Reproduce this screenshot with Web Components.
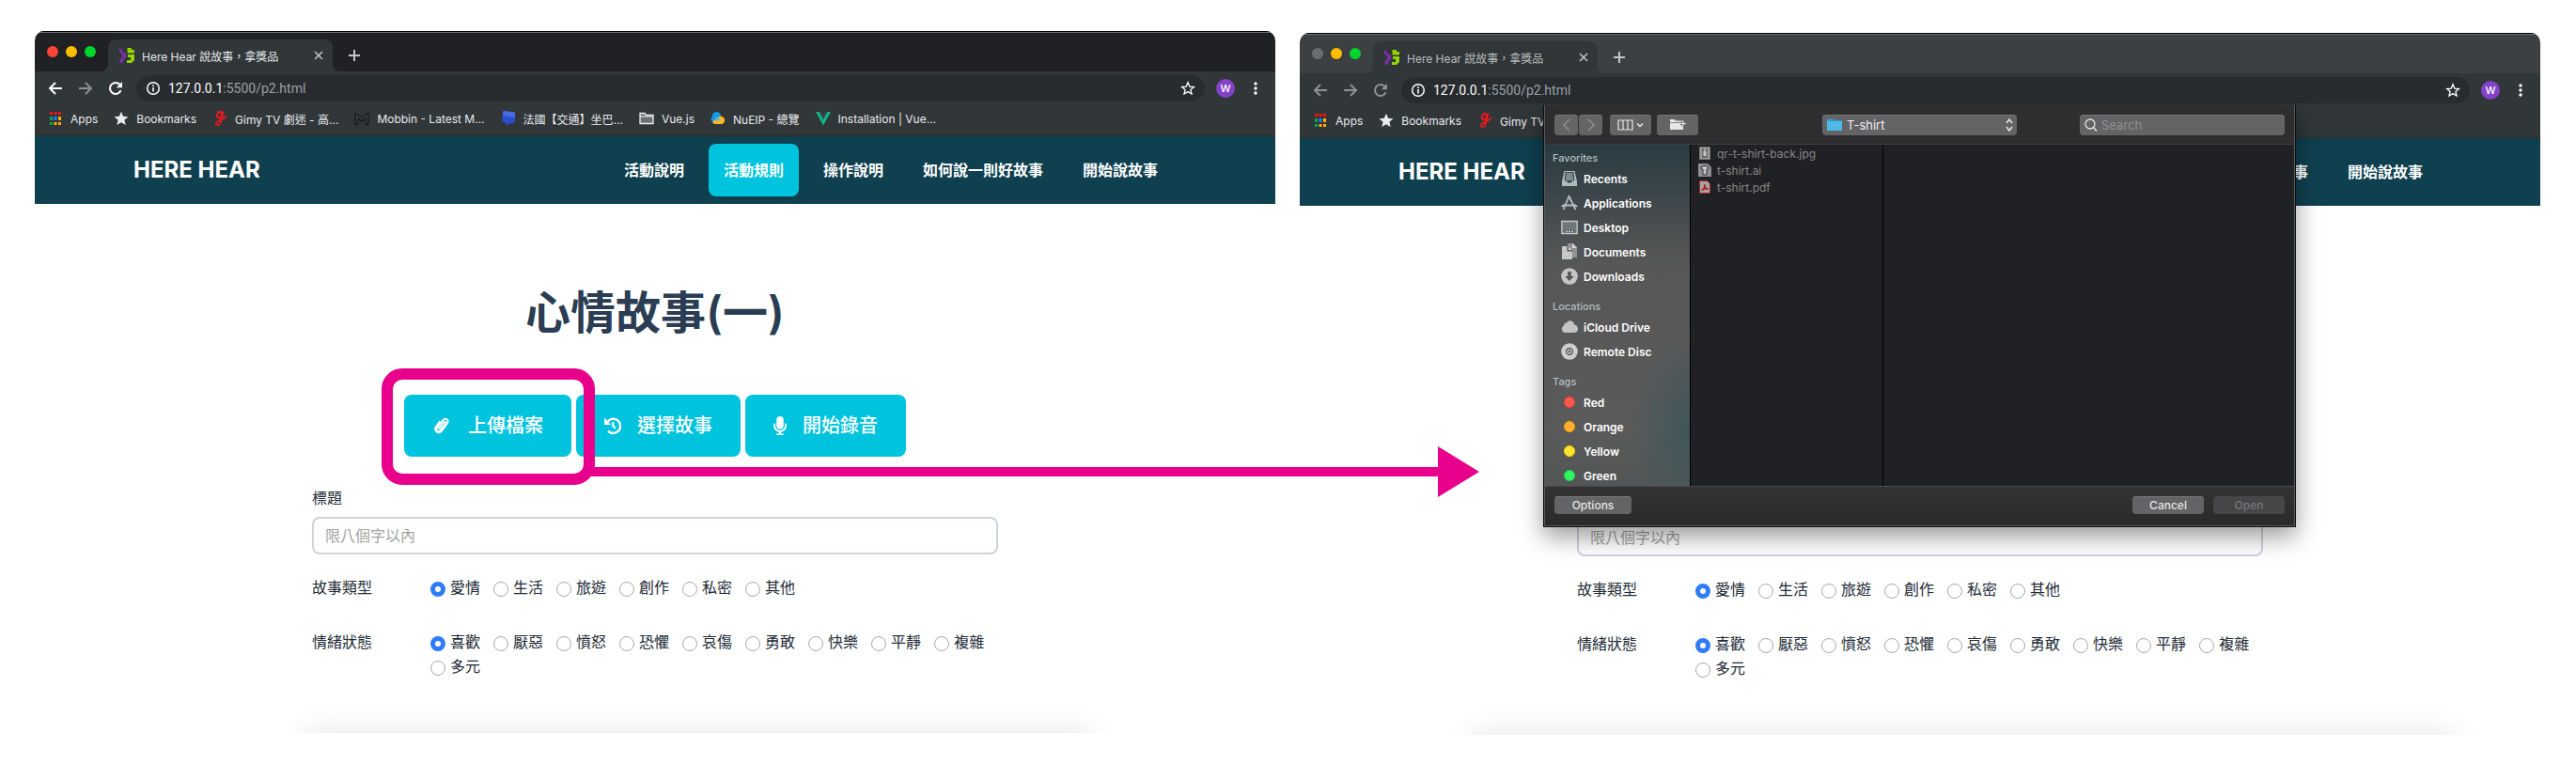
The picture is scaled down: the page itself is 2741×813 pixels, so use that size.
<!DOCTYPE html>
<html lang="zh-Hant">
<head>
<meta charset="utf-8">
<title>Here Hear 說故事，拿獎品</title>
<style>
  body { margin: 0; background: #fff; font-family: Inter, "Noto Sans CJK TC", sans-serif; }
</style>
</head>
<body>
<upload-guide></upload-guide>

<script>
const ICONS = {
  back: ['0 0 16 16', '<path d="M15 8H2M8 2L2 8l6 6" fill="none" stroke="currentColor" stroke-width="2"/>'],
  forward: ['0 0 16 16', '<path d="M1 8h13M8 2l6 6-6 6" fill="none" stroke="currentColor" stroke-width="2"/>'],
  reload: ['0 0 16 16', '<path d="M13.6 10.2A6 6 0 1 1 12.5 4" fill="none" stroke="currentColor" stroke-width="2"/><path d="M15 1v6.2H8.8z" fill="currentColor"/>'],
  info: ['0 0 16 16', '<circle cx="8" cy="8" r="6.3" fill="none" stroke="currentColor" stroke-width="1.5"/><path d="M7.2 7h1.6v4.6H7.2zM7.2 4.3h1.6v1.6H7.2z" fill="currentColor"/>'],
  star: ['0 0 16 16', '<path d="M8 1.8l1.8 4.3 4.6.4-3.5 3 1.1 4.5L8 11.600l-4 2.4 1.100-4.500-3.500-3 4.600-.4z" fill="none" stroke="currentColor" stroke-width="1.3"/>'],
  starFull: ['0 0 16 16', '<path d="M8 .8l2.100 5 5.400.4-4.100 3.500 1.300 5.300L8 12.200l-4.700 2.800 1.300-5.300L.5 6.200l5.400-.4z" fill="currentColor"/>'],
  dots: ['0 0 16 16', '<g fill="currentColor"><circle cx="8" cy="3" r="1.7"/><circle cx="8" cy="8" r="1.7"/><circle cx="8" cy="13" r="1.7"/></g>'],
  close: ['0 0 16 16', '<path d="M4 4l8 8M12 4l-8 8" stroke="currentColor" stroke-width="1.5"/>'],
  plus: ['0 0 16 16', '<path d="M8 2v12M2 8h12" stroke="currentColor" stroke-width="2"/>'],
  favicon: ['0 0 16 16', '<path d="M0 0l3 1.500v3h2l2 1.500v5H5v2l-2 3H.5v-4L3 10V7L0 4.500z" fill="#7b2fa5"/><path d="M8.500 0H13v2h3v3.500H8.500zM9 7h7v6l-3 3H8v-3h4v-3H9z" fill="#93d400"/>'],
  apps: ['0 0 16 16', '<path d="M2 1h3v3H2zM6.500 1h3v3h-3zM11 1h3v3h-3z" fill="#f11"/><path d="M2 6h3v4H2zM2 12h3v3H2z" fill="#00a651"/><path d="M6.500 6h3v4h-3z" fill="#1a82ff"/><path d="M11 6h3v4h-3zM6.500 12h3v3h-3zM11 12h3v3h-3z" fill="#ffab00"/>'],
  gimy: ['0 0 16 16', '<ellipse cx="7.500" cy="4.200" rx="2.300" ry="3.300" transform="rotate(25 7.500 4.200)" fill="none" stroke="#f5161e" stroke-width="2"/><path d="M11.500 1L8.800 11.500c-.7 2.900-2.600 4-4.200 3.300-1.500-1-.2-3.300 2.500-4.300 3-1.100 5.500-2.200 7.400-4.700" fill="none" stroke="#f5161e" stroke-width="1.700" stroke-linecap="round"/>'],
  mobbin: ['0 0 16 16', '<path d="M1 14.500V2l7 5 7-5v12.500h-3V8.500l-4 2.800-4-2.800v6z" fill="#23272a" stroke="#15181a"/><path d="M2.800 13V5L8 8.700 13.200 5v8" fill="none" stroke="#4a4f52" stroke-width=".8"/>'],
  bluebox: ['0 0 16 16', '<path d="M2.500 0L15 1.500V11l-1.500 2-5.500.5L6 16l-.5-3L1 11z" fill="#2e4fd0"/><path d="M2.500 0L15 1.500V7L1.500 5z" fill="#456be8"/>'],
  folderLine: ['0 0 16 16', '<path d="M1 13.500V2.500h5l1.500 2H15v9z" fill="#6c7073" stroke="#eee" stroke-width="1.300"/><path d="M1 6h14" stroke="#eee"/>'],
  nueip: ['0 0 16 16', '<path d="M4.500 13A4 4 0 0 1 2 6a4.500 4.500 0 0 1 8.500-2.500L11 6 8 13z" fill="#139be4"/><path d="M5 14l4-8a4 4 0 1 1 3.500 8z" fill="#ffb818"/><path d="M2 12l3-3 4 1-1.500 4H4z" fill="#f2b233"/><path d="M6 6.500l4.500 4M6 10.500l3-4" stroke="#5ab9e8" stroke-width="1.200"/>'],
  vue: ['0 0 16 16', '<path d="M0 1h3.500L8 9l4.500-8H16L8 15.500z" fill="#10b981"/><path d="M3.500 1H6l2 3.500L10 1h2.500L8 9z" fill="#34495e"/>'],
  clip: ['0 0 21 20', '<path d="M5.800 12.900l5.700-6.200c1.100-1.200 2.900.2 1.800 1.500l-6.500 7c-2.200 2.200-5.300-.5-3.200-2.900l7.300-8c2.800-2.900 6.900.6 4.300 3.700l-6.400 7.200c-3.700 4.100-9.600-.7-6-4.900L7.300 5.400" transform="translate(1 0) rotate(-6 9 10)" fill="none" stroke="currentColor" stroke-width="1.800" stroke-linecap="round"/>'],
  history: ['0 0 18 20', '<path d="M3.200 6.200A7.600 7.600 0 1 1 4 15.600" fill="none" stroke="currentColor" stroke-width="2.400"/><path d="M0 1.500V9h7.200z" fill="currentColor"/><path d="M9.300 6v4.600l2.700 2.100" fill="none" stroke="currentColor" stroke-width="2"/>'],
  mic: ['0 0 352 512', '<path fill="currentColor" d="M176 352c53.020 0 96-42.980 96-96V96c0-53.020-42.980-96-96-96S80 42.980 80 96v160c0 53.020 42.980 96 96 96zm160-160h-16c-8.840 0-16 7.160-16 16v48c0 74.800-64.490 134.820-140.790 127.380C96.710 376.890 48 317.110 48 250.300V208c0-8.840-7.160-16-16-16H16c-8.840 0-16 7.160-16 16v40.160c0 89.640 63.970 169.550 152 181.690V464H96c-8.840 0-16 7.160-16 16v16c0 8.840 7.160 16 16 16h160c8.840 0 16-7.160 16-16v-16c0-8.840-7.160-16-16-16h-56v-33.770C285.710 418.470 352 344.900 352 256v-48c0-8.840-7.160-16-16-16z"/>'],
  left: ['0 0 16 16', '<path d="M11 2L5 8l6 6" fill="none" stroke="currentColor" stroke-width="1.400"/>'],
  right: ['0 0 16 16', '<path d="M5 2l6 6-6 6" fill="none" stroke="currentColor" stroke-width="1.400"/>'],
  columns: ['0 0 28 16', '<path d="M1 3h15v10H1zM6 3v10M11 3v10" fill="none" stroke="currentColor" stroke-width="1.200"/><path d="M21 6.500l3 3 3-3" fill="none" stroke="currentColor" stroke-width="1.500"/>'],
  newFolder: ['0 0 18 16', '<path d="M1 2h5l1 1.500h8V13H1z" fill="currentColor"/><path d="M1 5.500h11" stroke="#646466" stroke-width=".8"/><path d="M15 3.500v6M12 6.500h6" stroke="#646466" stroke-width="3"/><path d="M15 3.500v6M12 6.500h6" stroke="currentColor" stroke-width="1.200"/>'],
  blueFolder: ['0 0 16 16', '<path d="M0 14V1.500h6L7.500 3H16v11z" fill="#2e9fd0"/><path d="M0 4h16v10H0z" fill="#4fb9e6"/>'],
  updown: ['0 0 16 16', '<path d="M5 6l3-4 3 4M5 10l3 4 3-4" fill="none" stroke="currentColor" stroke-width="1.500"/>'],
  search: ['0 0 16 16', '<circle cx="6" cy="7" r="5" fill="none" stroke="currentColor" stroke-width="1.300"/><path d="M9.500 10.500L13 14.500" stroke="currentColor" stroke-width="1.500"/>'],
  recents: ['0 0 18 18', '<path d="M3.500 1h11L17 12v5H1v-5z" fill="#aebcc1"/><path d="M4.500 2h9l.8 9.500h-2.300l-1 2H7l-1-2H3.700z" fill="#38484e"/><path d="M5.500 4h7M5.300 6h7.400M5 8h8M5 10h8" stroke="#c3ced2"/>'],
  applications: ['0 0 18 18', '<path d="M9 1L2.500 16M8 1l7.500 15M5 11.500h8" fill="none" stroke="#b3bec2" stroke-width="1.800"/><path d="M1 13c1-1.500 2.500-2 4-2M17 13c-1-1.500-2.500-2-4-2" fill="none" stroke="#b3bec2" stroke-width="2"/>'],
  desktop: ['0 0 18 18', '<path d="M.8 2.500h16.400v13H.8z" fill="#6f7678" stroke="#c3c9cb" stroke-width="1.300"/><path d="M4 12h10v3H4z" fill="#3f4547"/><path d="M5 12.500h2v2H5zM8 12.500h2v2H8zM11 12.500h2v2h-2z" fill="#d5d9da"/>'],
  documents: ['0 0 18 18', '<path d="M7 0h6l4 4v11H7z" fill="#8f9192"/><path d="M12 0l5 5h-5z" fill="#d9d9d9"/><path d="M1 3h6l5 5v9H1z" fill="#c6c7c8"/><path d="M6.500 2v6.500H13z" fill="#57595a"/><path d="M8 3.500V7h3.600z" fill="#d9d9d9"/>'],
  downloads: ['0 0 18 18', '<circle cx="9" cy="9" r="8.800" fill="#c6c6c6"/><path d="M7.200 4h3.600v5h3L9 14 4.200 9h3z" fill="#555"/>'],
  cloud: ['0 0 18 18', '<path d="M4 15a4 4 0 0 1-1-7.500 3 3 0 0 1 3-3 4.300 4.300 0 0 1 8 2A4.300 4.300 0 0 1 14.500 15z" fill="#c4c4c4"/>'],
  disc: ['0 0 18 18', '<circle cx="9" cy="9" r="8.800" fill="#cfcfcf"/><circle cx="9" cy="9" r="4.200" fill="#666"/><circle cx="9" cy="9" r="2.600" fill="#c4c4c4"/><circle cx="9" cy="9" r="1.200" fill="#555"/>'],
  tagRed: ['0 0 18 18', '<circle cx="9" cy="9" r="5.500" fill="#ff5a50" stroke="#ff3b30"/>'],
  tagOrange: ['0 0 18 18', '<circle cx="9" cy="9" r="5.500" fill="#ffb02e" stroke="#ff9f0a"/>'],
  tagYellow: ['0 0 18 18', '<circle cx="9" cy="9" r="5.500" fill="#ffe52e" stroke="#ffd60a"/>'],
  tagGreen: ['0 0 18 18', '<circle cx="9" cy="9" r="5.500" fill="#32f562" stroke="#1fd750"/>'],
  fileJpg: ['0 0 14 14', '<path d="M1.500.5h11v13h-11z" fill="#9a9a9a" stroke="#777"/><path d="M4 2h6v10H4z" fill="#6d6a6a"/><path d="M5.500 5h3v5h-3zM6 2.500h2v2H6z" fill="#c9c4c4"/>'],
  fileAi: ['0 0 14 14', '<path d="M0 0h10l4 4v10H0z" fill="#8b9096"/><path d="M3 4l3-1.500h2L11 4l-1 2.500-1-.5v6H5V6l-1 .5z" fill="#c5c7c9" stroke="#333"/>'],
  filePdf: ['0 0 14 14', '<path d="M1.500.5h8l3 3v10h-11z" fill="#a9a2a2" stroke="#a3252b"/><path d="M3.500 10.500c2-1 3.500-4 3.300-6.500 0 3 1.500 5 4 5-2.500-.5-5 0-7.300 1.500z" fill="none" stroke="#b3161d" stroke-width="1.300"/>'],
};

/* Base class: attaches an open root filled from a template string. */
class Part extends HTMLElement {
  constructor() { super(); this.attachShadow({ mode: 'open' }); }
  connectedCallback() {
    const t = document.createElement('template');
    t.innerHTML = this.render();
    this.shadowRoot.replaceChildren(t.content.cloneNode(true));
  }
}

customElements.define('ui-icon', class extends Part {
  render() {
    const [box, body] = ICONS[this.getAttribute('name')];
    return `<style>
      :host { display: block; flex: none; width: 16px; height: 16px; }
      svg { display: block; width: 100%; height: 100%; }
    </style><svg viewBox="${box}" aria-hidden="true">${body}</svg>`;
  }
});

customElements.define('browser-window', class extends Part {
  render() {
    const marks = [['apps', 'Apps'], ['starFull', 'Bookmarks'], ['gimy', 'Gimy TV 劇迷 - 高...'], ['mobbin', 'Mobbin - Latest M...'],
      ['bluebox', '法國【交通】坐巴...'], ['folderLine', 'Vue.js'], ['nueip', 'NuEIP - 總覽'], ['vue', 'Installation | Vue...']];
    return `<style>
      :host { display: block; position: relative; --strip: #202124; --nav: #fff; --title: #e4e6e8; --close: #ff4238; }
      :host([inactive]) { --strip: #3c4043; --nav: #8d9194; --title: #b9bcbe; --close: #6b6e70; }
      button { all: unset; display: block; flex: none; }
      .frame { overflow: hidden; border-radius: 10px 10px 0 0; background: #fff; }
      .strip { display: flex; align-items: flex-start; height: 43px; background: var(--strip); box-shadow: inset 0 1px #000, inset 0 2px #6d7072; }
      .lights { display: flex; gap: 8px; padding: 16px 7px 0 13px; }
      .lights i { width: 12px; height: 12px; border-radius: 50%; background: var(--close); }
      .lights i:nth-child(2) { background: #ffbd00; }
      .lights i:nth-child(3) { background: #00d52b; }
      .tab { position: relative; display: flex; align-items: center; gap: 8px; box-sizing: border-box; width: 239px; height: 34px; margin: 9px 15px 0 6px; padding: 0 7px 0 12px; border-radius: 8px 8px 0 0; background: #313639; color: var(--title); font-size: 12px; }
      .tab::before, .tab::after { content: ""; position: absolute; bottom: 0; width: 8px; height: 8px; }
      .tab::before { left: -8px; background: radial-gradient(circle at 0 0, transparent 8px, #313639 8px); }
      .tab::after { right: -8px; background: radial-gradient(circle at 100% 0, transparent 8px, #313639 8px); }
      .tab span { flex: 1; white-space: nowrap; }
      .tab button, .new { color: #c4c7c9; }
      .new { margin-top: 18px; }
      .bar { display: flex; align-items: center; height: 28px; padding: 4px 13px 3px 14px; background: #313639; color: var(--nav); }
      .bar > button + button { margin-left: 16px; }
      .bar > .fwd { color: #8d9194; }
      .url { flex: 1; display: flex; align-items: center; gap: 8px; height: 28px; margin: 0 12px 0 14px; padding: 0 10px; border-radius: 14px; background: #282c2f; color: #fff; font: 14px/28px Roboto, sans-serif; }
      .url p { flex: 1; margin: 0; color: #9aa0a6; }
      .url b { color: #fff; font-weight: 400; }
      .avatar { width: 20px; height: 20px; border-radius: 50%; background: #8442c8; color: #fff; font: 500 11px/20px Inter, sans-serif; text-align: center; }
      .bar > .more { margin-left: 14px; color: #fff; }
      nav { display: flex; gap: 17px; height: 30px; padding: 0 14px 3px; border-bottom: 1px solid #2a2a2a; background: #313639; }
      nav a { display: flex; align-items: center; gap: 8px; color: #e8eaed; font-size: 12px; text-decoration: none; white-space: nowrap; }
    </style>
    <div class="frame">
      <div class="strip">
        <div class="lights"><i></i><i></i><i></i></div>
        <div class="tab"><ui-icon name="favicon"></ui-icon><span>Here Hear 說故事，拿獎品</span><button aria-label="Close tab"><ui-icon name="close"></ui-icon></button></div>
        <button class="new" aria-label="New tab"><ui-icon name="plus"></ui-icon></button>
      </div>
      <div class="bar">
        <button aria-label="Back"><ui-icon name="back"></ui-icon></button>
        <button class="fwd" aria-label="Forward"><ui-icon name="forward"></ui-icon></button>
        <button aria-label="Reload"><ui-icon name="reload"></ui-icon></button>
        <div class="url"><ui-icon name="info"></ui-icon><p><b>127.0.0.1</b>:5500/p2.html</p><ui-icon name="star"></ui-icon></div>
        <button class="avatar">W</button>
        <button class="more" aria-label="Menu"><ui-icon name="dots"></ui-icon></button>
      </div>
      <nav>${marks.map(([i, t]) => `<a href="#"><ui-icon name="${i}"></ui-icon>${t}</a>`).join('')}</nav>
      <slot></slot>
    </div>
    <slot name="sheet"></slot>`;
  }
});

customElements.define('site-header', class extends Part {
  render() {
    return `<style>
      :host { display: flex; align-items: center; justify-content: space-between; height: 72px; padding: 0 109px 0 105px; background: #0f404f; color: #fff; }
      a { color: inherit; text-decoration: none; white-space: nowrap; }
      .brand { font-size: 24px; font-weight: 700; line-height: 32px; }
      nav { display: flex; gap: 10px; }
      nav a { padding: 16px; border-radius: 8px; font-size: 16px; font-weight: 700; line-height: 24px; }
      nav a[aria-current] { background: #00c4de; }
    </style>
    <a class="brand" href="#">HERE HEAR</a>
    <nav><a href="#">活動說明</a><a href="#" aria-current="page">活動規則</a><a href="#">操作說明</a><a href="#">如何說一則好故事</a><a href="#">開始說故事</a></nav>`;
  }
});

customElements.define('choice-row', class extends Part {
  render() {
    const name = this.getAttribute('name');
    const opts = this.getAttribute('options').split(' ');
    return `<style>
      :host { display: block; }
      fieldset { display: flex; margin: 0; padding: 0; border: 0; font-size: 16px; line-height: 26px; color: #222b36; }
      .name { flex: none; width: 126px; }
      .opts { display: flex; flex-wrap: wrap; column-gap: 14px; }
      label { display: flex; align-items: center; gap: 5px; }
      input { appearance: none; box-sizing: border-box; width: 16px; height: 16px; margin: 3px 0 0; border: 1px solid #a8a8a8; border-radius: 50%; background: #fff; }
      input:checked { border: 5px solid #2f7cf8; }
    </style>
    <fieldset aria-label="${name}"><span class="name">${name}</span><div class="opts">
      ${opts.map((o, i) => `<label><input type="radio" name="choice" value="${o}"${i ? '' : ' checked'}>${o}</label>`).join('')}
    </div></fieldset>`;
  }
});

customElements.define('story-page', class extends Part {
  render() {
    return `<style>
      :host { display: block; position: relative; overflow: hidden; padding: 80px 24px 58px; }
      h1 { margin: 0; color: #2a3d53; font-size: 48px; font-weight: 600; line-height: 72px; text-align: center; }
      .actions { display: flex; justify-content: center; gap: 5px; margin-top: 51px; }
      .actions button { display: flex; align-items: center; gap: 17px; height: 66px; padding: 0 30px; border: 0; border-radius: 8px; background: #00c4de; color: #fff; font: 500 20px/30px Inter, "Noto Sans CJK TC", sans-serif; }
      .actions ui-icon { width: 18px; height: 20px; }
      .actions .clip { width: 21px; }
      .actions .mic { width: 14px; }
      form { max-width: 730px; margin: 32px auto 0; }
      .title { display: block; visibility: var(--title-visibility, visible); color: #222b36; font-size: 16px; line-height: 24px; }
      .text { display: block; box-sizing: border-box; width: 100%; height: 40px; margin: 8px 0 22px; padding: 0 12px; border: 2px solid #cdd3df; border-radius: 8px; background: #fff; font: 16px/24px Inter, "Noto Sans CJK TC", sans-serif; }
      .text::placeholder { color: #a3a3a3; opacity: 1; }
      choice-row + choice-row { margin-top: 32px; }
      .next { position: absolute; top: 100%; left: var(--next-left, 22%); right: var(--next-right, 15%); height: 60px; box-shadow: 0 0 30px 2px rgba(0, 0, 0, .1); }
    </style>
    <h1>心情故事(一)</h1>
    <div class="actions">
      <button type="button"><ui-icon class="clip" name="clip"></ui-icon>上傳檔案</button>
      <button type="button"><ui-icon name="history"></ui-icon>選擇故事</button>
      <button type="button"><ui-icon class="mic" name="mic"></ui-icon>開始錄音</button>
    </div>
    <form>
      <label class="title" for="title">標題</label>
      <input class="text" id="title" type="text" placeholder="限八個字以內">
      <choice-row name="故事類型" options="愛情 生活 旅遊 創作 私密 其他"></choice-row>
      <choice-row name="情緒狀態" options="喜歡 厭惡 憤怒 恐懼 哀傷 勇敢 快樂 平靜 複雜 多元"></choice-row>
    </form>
    <div class="next"></div>`;
  }
});

customElements.define('file-dialog', class extends Part {
  render() {
    const groups = [
      ['Favorites', [['recents', 'Recents'], ['applications', 'Applications'], ['desktop', 'Desktop'], ['documents', 'Documents'], ['downloads', 'Downloads']]],
      ['Locations', [['cloud', 'iCloud Drive'], ['disc', 'Remote Disc']]],
      ['Tags', [['tagRed', 'Red'], ['tagOrange', 'Orange'], ['tagYellow', 'Yellow'], ['tagGreen', 'Green']]],
    ];
    const files = [['fileJpg', 'qr-t-shirt-back.jpg'], ['fileAi', 't-shirt.ai'], ['filePdf', 't-shirt.pdf']];
    return `<style>
      :host { display: flex; flex-direction: column; box-sizing: border-box; width: 801px; height: 449px; border: 1px solid #0b0b0b; border-top: 0; background: #2e2e30; box-shadow: inset 1px 0 #5c5c5e, inset -1px -1px #5c5c5e, 0 10px 24px rgba(0, 0, 0, .4); color: #e6e6e6; font-size: 12px; }
      button { padding: 0; border: 0; border-radius: 4px; background: #646466; color: #e6e6e6; font: 500 12px/19px Inter, sans-serif; box-shadow: inset 0 1px #777; }
      .tools { display: flex; align-items: center; height: 42px; padding: 0 11px; border-bottom: 1px solid #3b4043; box-sizing: border-box; }
      .tools button { display: grid; place-items: center; height: 22px; width: 44px; }
      .tools .step { width: 25px; margin-right: 1px; color: #939395; }
      .tools .view { margin: 0 6px 0 7px; }
      .view ui-icon { width: 28px; } .make ui-icon { width: 18px; }
      .field { position: relative; height: 22px; color: #e6e6e6; }
      .field ui-icon { position: absolute; top: 3px; left: 5px; pointer-events: none; }
      .field .end { left: auto; right: 0; }
      .where { width: 207px; margin: 0 67px 0 auto; }
      .find { width: 218px; }
      select, .find input { display: block; box-sizing: border-box; appearance: none; width: 100%; height: 22px; padding: 0 20px 0 26px; border: 0; border-radius: 4px; background: #646466; box-shadow: inset 0 1px #777; color: #f0f0f0; font: 13px/22px Inter, sans-serif; }
      .find input { padding: 0 8px 0 23px; }
      .find input::placeholder { color: #909092; opacity: 1; }
      .body { flex: 1; display: flex; min-height: 0; margin: 0 1px; background: #202124; }
      aside { width: 155px; box-sizing: border-box; padding: 5px 0 0 8px; overflow: hidden; background: radial-gradient(ellipse 60px 100px at 100% 84%, #3f565a, transparent), linear-gradient(#283b42, #474c4e 22%, #575757 35%, #5a5a5a 84%, #535656); border-right: 1px solid #000; }
      h2 { margin: 0; height: 18px; color: #b5bdc0; font-size: 11px; font-weight: 500; line-height: 18px; }
      ul { list-style: none; margin: 0 0 10px; padding: 0; }
      aside li { display: flex; align-items: center; gap: 6px; height: 26px; padding-left: 9px; color: #fff; font-weight: 600; }
      aside ui-icon { width: 18px; height: 18px; }
      .files { width: 205px; box-sizing: border-box; margin: 0; border-right: 1px solid #000; }
      .files li { display: flex; align-items: center; gap: 6px; height: 18px; padding-left: 8px; color: #87888a; }
      .files ui-icon { width: 14px; height: 14px; }
      footer { display: flex; gap: 10px; height: 42px; box-sizing: border-box; padding: 10px 10px 0; border-top: 1px solid #4a4a4c; background: linear-gradient(#333, #2a2a2a); margin: 0 1px 1px; }
      footer button { width: 76px; height: 19px; }
      footer .options { width: 82px; margin-right: auto; }
      footer button:disabled { background: #464648; color: #77777a; box-shadow: none; }
    </style>
    <div class="tools">
      <button class="step" aria-label="Back"><ui-icon name="left"></ui-icon></button>
      <button class="step" aria-label="Forward"><ui-icon name="right"></ui-icon></button>
      <button class="view" aria-label="View"><ui-icon name="columns"></ui-icon></button>
      <button class="make" aria-label="New folder"><ui-icon name="newFolder"></ui-icon></button>
      <div class="field where"><select aria-label="Folder"><option>T-shirt</option></select><ui-icon name="blueFolder"></ui-icon><ui-icon class="end" name="updown"></ui-icon></div>
      <div class="field find"><input type="search" aria-label="Search" placeholder="Search"><ui-icon name="search"></ui-icon></div>
    </div>
    <div class="body">
      <aside>${groups.map(([h, items]) => `<h2>${h}</h2><ul>${items.map(([i, t]) => `<li><ui-icon name="${i}"></ui-icon>${t}</li>`).join('')}</ul>`).join('')}</aside>
      <ul class="files">${files.map(([i, t]) => `<li><ui-icon name="${i}"></ui-icon>${t}</li>`).join('')}</ul>
    </div>
    <footer><button class="options">Options</button><button>Cancel</button><button disabled>Open</button></footer>`;
  }
});

/* Pink ring round the upload button, with an arrow to the file dialog. */
customElements.define('callout-arrow', class extends Part {
  render() {
    return `<style>
      :host { display: block; color: #e8008c; pointer-events: none; }
      svg { display: block; overflow: visible; }
    </style>
    <svg width="1168" height="138" viewBox="0 0 1168 138" aria-hidden="true">
      <rect x="6" y="6" width="215" height="112" rx="16" fill="none" stroke="currentColor" stroke-width="12"/>
      <path d="M222 105h902V83l44 27-44 27v-22H222z" fill="currentColor"/>
    </svg>`;
  }
});

customElements.define('upload-guide', class extends Part {
  render() {
    return `<style>
      :host { position: relative; display: flex; align-items: flex-start; gap: 26px; padding: 33px 38px 30px 37px; }
      browser-window { flex: 1; min-width: 0; }
      .second { margin-top: 2px; }
      .second story-page { --next-left: 14%; --next-right: 7%; --title-visibility: hidden; }
      file-dialog { position: absolute; top: 77px; left: calc(50% - 401px); }
      callout-arrow { position: absolute; top: 392px; left: 406px; }
    </style>
    <browser-window><site-header></site-header><story-page></story-page></browser-window>
    <browser-window class="second" inactive><site-header></site-header><story-page></story-page><file-dialog slot="sheet"></file-dialog></browser-window>
    <callout-arrow></callout-arrow>`;
  }
});
</script>
</body>
</html>
